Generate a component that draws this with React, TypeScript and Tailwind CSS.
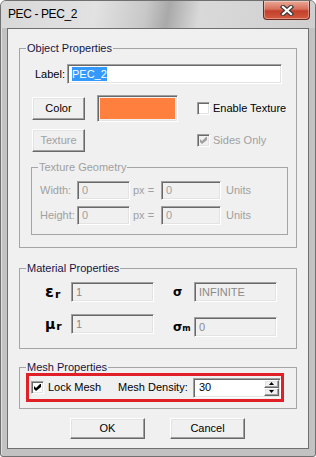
import type { ReactNode } from 'react';

const raised =
  'border border-t-white border-l-white border-r-[#696969] border-b-[#696969] shadow-[inset_-1px_-1px_0_#a0a0a0,inset_1px_1px_0_#e3e3e3]';
const sunken =
  'border border-t-[#a0a0a0] border-l-[#a0a0a0] border-r-white border-b-white shadow-[inset_1px_1px_0_#696969,inset_-1px_-1px_0_#e3e3e3]';

function Group({ title, disabled, className = '', children }: { title: string; disabled?: boolean; className?: string; children: ReactNode }) {
  return (
    <fieldset className={`border border-[#a5a5a5] ${className}`}>
      <legend className={`ml-[6px] px-px text-[11px] leading-[13px] ${disabled ? 'text-[#a0a0a0]' : 'text-[#151545]'}`}>
        {title}
      </legend>
      {children}
    </fieldset>
  );
}

function CheckBox({ checked, disabled }: { checked?: boolean; disabled?: boolean }) {
  return (
    <span className={`flex h-[13px] w-[13px] shrink-0 items-center justify-center ${sunken} ${disabled ? 'bg-[#f0f0f0]' : 'bg-white'}`}>
      {checked && (
        <svg width="7" height="7" viewBox="0 0 7 7">
          <path d="M0 2L2 4L6 0H7V3L2 7L0 5Z" fill={disabled ? '#a0a0a0' : '#000'} />
        </svg>
      )}
    </span>
  );
}

function Button({ label, disabled, className = '' }: { label: string; disabled?: boolean; className?: string }) {
  return (
    <div className={`flex items-center justify-center bg-[#f0f0f0] text-[11px] ${raised} ${disabled ? 'text-[#a0a0a0]' : 'text-black'} ${className}`}>
      {label}
    </div>
  );
}

function Field({ value, className = '', textClass = 'text-[#8a8a8a]' }: { value: string; className?: string; textClass?: string }) {
  return (
    <div className={`flex items-center bg-[#f0f0f0] pl-[4px] text-[11px] ${sunken} ${textClass} ${className}`}>{value}</div>
  );
}

function Arrow({ up }: { up?: boolean }) {
  return (
    <svg width="5" height="3" viewBox="0 0 5 3">
      <path d={up ? 'M0 3L2.5 0L5 3Z' : 'M0 0L5 0L2.5 3Z'} fill="#000" />
    </svg>
  );
}

export default function App() {
  return (
    <div className="h-[457px] w-[316px] font-['Liberation_Sans',Arial,sans-serif]">
      <div className="flex h-full flex-col rounded-t-[6px] rounded-b-[3px] border border-[#707070] bg-[#c2c2c2] shadow-[inset_1px_1px_0_#dedede]">
        {/* title bar */}
        <div className="flex h-[27px] shrink-0 rounded-t-[5px] bg-[linear-gradient(100deg,#d8d8d8_0%,#e2e2e2_30%,#c8c8c8_46%,#a9a9a9_53%,#d9d9d9_63%,#cfcfcf_100%)]">
          <span className="ml-[7px] mt-[6px] text-[12px] leading-[15px] tracking-[-0.4px] text-black">PEC - PEC_2</span>
          <div className="ml-auto mr-[5px] flex h-[19px] w-[47px] items-center justify-center rounded-b-[4px] border border-t-0 border-[#6e2a20] bg-[linear-gradient(180deg,#e8a996_0%,#d8705c_45%,#c2402c_55%,#d4593f_100%)] shadow-[inset_0_0_0_1px_rgba(255,255,255,0.35)]">
            <svg width="14" height="11" viewBox="0 0 14 11">
              <path d="M3 2L11 9M11 2L3 9" stroke="#3a3a3a" strokeWidth="4.4" strokeLinecap="square" />
              <path d="M3 2L11 9M11 2L3 9" stroke="#fff" strokeWidth="2.2" strokeLinecap="square" />
            </svg>
          </div>
        </div>

        {/* client area */}
        <div className="mx-[6px] mb-[7px] flex-1 border border-[#6f6f6f] bg-[#f0f0f0] pl-[11px] pt-[13px] text-[11px] text-black">
          <Group title="Object Properties" className="w-[278px] pb-[12px]">
            <div className="mt-[9px] flex items-center pl-[15px]">
              <span className="w-[32px]">Label:</span>
              <div className={`flex h-[20px] w-[215px] items-center bg-white pl-[4px] ${sunken}`}>
                <span className="bg-[#3399ff] leading-[14px] text-white">PEC_2</span>
              </div>
            </div>

            <div className="mt-[11px] flex h-[27px] items-center pl-[12px]">
              <Button label="Color" className="h-[23px] w-[53px]" />
              <div className={`ml-[12px] h-[27px] w-[81px] bg-[#f0f0f0] p-[2px] ${sunken}`}>
                <div className="h-full w-full bg-[#ff7f3f]" />
              </div>
              <span className="ml-[19px]">
                <CheckBox />
              </span>
              <span className="ml-[3px]">Enable Texture</span>
            </div>

            <div className="mt-[7px] flex h-[23px] items-center pl-[12px]">
              <Button label="Texture" disabled className="h-[23px] w-[53px]" />
              <span className="ml-[112px]">
                <CheckBox checked disabled />
              </span>
              <span className="ml-[3px] text-[#a0a0a0]">Sides Only</span>
            </div>

            <Group title="Texture Geometry" disabled className="ml-[11px] mt-[9px] w-[257px] pb-[9px] text-[#a0a0a0]">
              <div className="mt-[7px] flex h-[19px] items-center pl-[8px]">
                <span className="w-[37px]">Width:</span>
                <Field value="0" className="h-[19px] w-[53px]" textClass="text-[#a0a0a0]" />
                <span className="ml-[3px] w-[28px]">px =</span>
                <Field value="0" className="h-[19px] w-[60px]" textClass="text-[#a0a0a0]" />
                <span className="ml-[5px]">Units</span>
              </div>
              <div className="mt-[6px] flex h-[19px] items-center pl-[8px]">
                <span className="w-[37px]">Height:</span>
                <Field value="0" className="h-[19px] w-[53px]" textClass="text-[#a0a0a0]" />
                <span className="ml-[3px] w-[28px]">px =</span>
                <Field value="0" className="h-[19px] w-[60px]" textClass="text-[#a0a0a0]" />
                <span className="ml-[5px]">Units</span>
              </div>
            </Group>
          </Group>

          <Group title="Material Properties" className="mt-[14px] w-[278px] pb-[11px]">
            <div className="mt-[7px] flex items-center pl-[25px]">
              <span className="flex w-[26px] items-center font-['DejaVu_Sans',sans-serif] font-bold">
                <span className="text-[16px] leading-[16px]">ε</span>
                <sub className="ml-px text-[11px]">r</sub>
              </span>
              <Field value="1" className="h-[20px] w-[83px]" />
              <span className="ml-[19px] w-[21px] font-['DejaVu_Sans',sans-serif] text-[12px] font-bold">σ</span>
              <Field value="INFINITE" className="h-[20px] w-[83px]" />
            </div>
            <div className="mt-[12px] flex items-start pl-[25px]">
              <span className="flex h-[20px] w-[26px] items-center font-['DejaVu_Sans',sans-serif] font-bold">
                <span className="text-[14px] leading-[16px]">μ</span>
                <sub className="ml-px text-[11px]">r</sub>
              </span>
              <Field value="1" className="h-[20px] w-[83px]" />
              <div className="ml-[19px] mt-[3px] flex items-center">
                <span className="flex w-[21px] items-center font-['DejaVu_Sans',sans-serif] font-bold">
                  <span className="text-[12px] leading-[14px]">σ</span>
                  <sub className="text-[8px]">m</sub>
                </span>
                <Field value="0" className="h-[20px] w-[83px]" />
              </div>
            </div>
          </Group>

          <Group title="Mesh Properties" className="mt-[12px] w-[278px] pb-[6px]">
            <div className="-mt-px ml-[6px] flex h-[29px] w-[258px] items-center border-[3px] border-[#e01f26] pl-[2px]">
              <CheckBox checked />
              <span className="ml-[4px] w-[70px]">Lock Mesh</span>
              <span>Mesh Density:</span>
              <div className={`ml-auto flex h-[20px] w-[88px] bg-white ${sunken}`}>
                <span className="flex flex-1 items-center pl-[5px] text-black">30</span>
                <div className="my-px mr-px flex w-[15px] flex-col">
                  <span className={`flex flex-1 items-center justify-center bg-[#f0f0f0] ${raised}`}>
                    <Arrow up />
                  </span>
                  <span className={`flex flex-1 items-center justify-center bg-[#f0f0f0] ${raised}`}>
                    <Arrow />
                  </span>
                </div>
              </div>
            </div>
          </Group>

          <div className="mt-[9px] flex pl-[51px]">
            <Button label="OK" className="h-[21px] w-[75px]" />
            <Button label="Cancel" className="ml-[25px] h-[21px] w-[75px]" />
          </div>
        </div>
      </div>
    </div>
  );
}
